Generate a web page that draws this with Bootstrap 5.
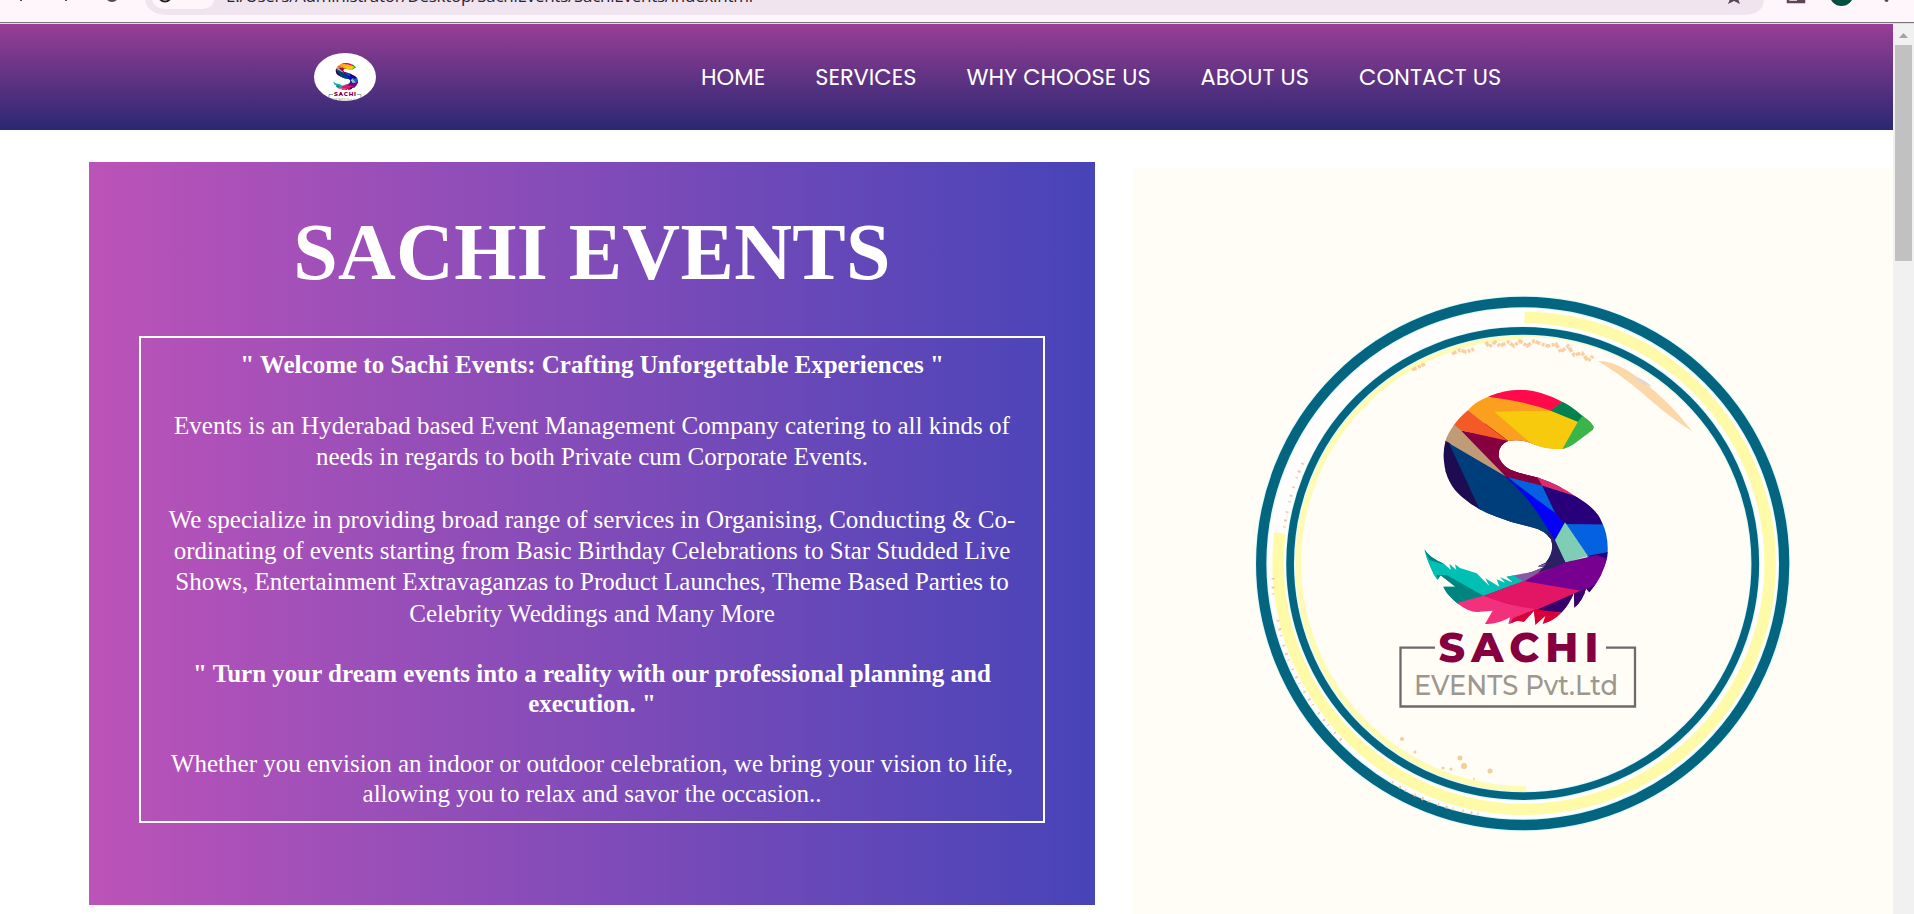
<!DOCTYPE html>
<html lang="en">
<head>
<meta charset="utf-8">
<title>Sachi Events</title>
<link rel="stylesheet" href="https://cdn.jsdelivr.net/npm/bootstrap@5.3.0/dist/css/bootstrap.min.css">
<style>
body{height:914px;overflow:hidden;background:#fff}
.chrome{height:24px;background:#fff6fb;border-bottom:1px solid #e3dbe2}
.chrome svg{display:block}
.page{height:890px}
.site-head{height:106px;background:linear-gradient(#983e95,#2a2873)}
.brand-logo{width:62px;height:48px;margin-left:314px}
.menu{margin-left:325px;gap:50px}
.menu a{font:22.5px/34px Poppins,Inter,sans-serif;color:#fff;text-decoration:none;white-space:nowrap}
.intro{width:1006px;height:743px;margin:32px 0 0 89px;padding:0 50px;background:linear-gradient(90deg,#bc53b8,#4744b8);font-family:"Liberation Serif",serif}
.intro h1{font-size:80px;line-height:92px;font-weight:700;letter-spacing:.35px;margin:44px 0 38px}
.welcome{border:2px solid #fff;height:487px;padding-top:12px;white-space:nowrap}
.welcome p,.welcome h2{font-size:25px;margin:0}
.welcome .about{line-height:31.25px;margin-top:30px}
.welcome h2{font-weight:700;line-height:30px}
.welcome h2.tagline{margin-top:30px}
.welcome .closing{line-height:30px;margin-top:30px}
.poster{width:760px;height:746px;margin:38px 0 0 38px}
.sbar{width:21px;background:#f1f1f1}
.thumb{width:17px;height:216px;background:#c1c1c1}
</style>
<script src="https://cdn.jsdelivr.net/npm/bootstrap@5.3.0/dist/js/bootstrap.bundle.min.js"></script>
</head>
<body>
<div class="chrome">
<svg width="1914" height="23" viewBox="0 0 1914 23">
<path d="M145 0Q148 15 168 15H1745Q1763 14 1764 0Z" fill="#f0e5ef"/>
<path d="M152 0Q155 9 166 9H203Q213 8 214 0Z" fill="#fff6fb"/>
<path d="M0 22H1914V23H0Z" fill="#77757a"/>
<circle cx="165" cy="-5" r="6.5" fill="none" stroke="#222" stroke-width="2"/>
<path d="M21 0V1M66 0V1" stroke="#5c4656" stroke-width="2"/><circle cx="112" cy="-5" r="6" fill="none" stroke="#5c4656" stroke-width="2"/>
<text x="226" y="2" font-family="Open Sans,sans-serif" font-size="17" textLength="527" fill="#2b2230">E:/Users/Administrator/Desktop/SachiEvents/SachiEvents/index.html</text>
<path d="M1734-12L1736-6 1743-5 1738-1 1740 4 1734 1 1728 4 1730-1 1725-5 1732-6Z" fill="#5c4656"/>
<path d="M1788-8H1804V2H1788Z" fill="none" stroke="#5c4656" stroke-width="2.5"/><path d="M1797-8H1804V2H1797Z" fill="#5c4656"/>
<circle cx="1841.500" cy="-6" r="12" fill="#005040"/><circle cx="1886.500" cy="0" r="2" fill="#5c4656"/>
</svg>
</div>
<div class="page d-flex">
<main class="flex-grow-1">
<header class="site-head d-flex align-items-center">
<svg class="brand-logo" viewBox="314 53 62 48">
<defs><clipPath id="oval"><ellipse cx="345" cy="77" rx="31" ry="24"/></clipPath></defs>
<g clip-path="url(#oval)"><path d="M314 53H376V101H314Z" fill="#fff"/>
<use href="#mark-s" transform="translate(327 60.500) scale(.0455 .039)"/>
<text x="334" y="95.500" font-family="Montserrat,Inter,sans-serif" font-size="5.800" font-weight="800" textLength="22" fill="#86003f">SACHI</text>
<path d="M329 94.500H333M357 94.500H361V102M329 94.500V102" fill="none" stroke="#777" stroke-width=".7"/>
<text x="331" y="100.500" font-family="Montserrat,Inter,sans-serif" font-size="4" textLength="28" fill="#8c8882">EVENTS Pvt.Ltd</text></g>
</svg>
<nav class="menu d-flex">
<a href="#">HOME</a><a href="#">SERVICES</a><a href="#">WHY CHOOSE US</a><a href="#">ABOUT US</a><a href="#">CONTACT US</a>
</nav>
</header>
<div class="d-flex">
<section class="intro text-white text-center d-flex flex-column">
<h1>SACHI EVENTS</h1>
<div class="welcome">
<h2>" Welcome to Sachi Events: Crafting Unforgettable Experiences "</h2>
<p class="about">Events is an Hyderabad based Event Management Company catering to all kinds of<br>needs in regards to both Private cum Corporate Events.<br><br>We specialize in providing broad range of services in Organising, Conducting &amp; Co-<br>ordinating of events starting from Basic Birthday Celebrations to Star Studded Live<br>Shows, Entertainment Extravaganzas to Product Launches, Theme Based Parties to<br>Celebrity Weddings and Many More</p>
<h2 class="tagline">" Turn your dream events into a reality with our professional planning and<br>execution. "</h2>
<p class="closing">Whether you envision an indoor or outdoor celebration, we bring your vision to life,<br>allowing you to relax and savor the occasion..</p>
</div>
</section>
<svg class="poster flex-shrink-0" viewBox="1133 168 760 746">
<defs>
<clipPath id="s-outline"><path d="M642 172Q635 155 608 138 570 105 548 96 480 60 420 59 370 60 330 78 285 95 262 122 235 145 222 165 200 195 196 215 188 245 192 275 198 340 245 380 290 420 350 440 400 460 450 470 495 480 513 508 525 545 497 578L474 589 495 590 455 606 380 620 402 640 360 621 375 638 350 628 358 650 316 625 328 648 290 610 240 594 225 583 229 600 208 581 213 600 190 580Q150 565 133 538 145 595 172 630L182 616 226 650 190 650Q205 685 235 702 270 730 300 725L338 722 315 762Q350 765 390 742L385 763 412 752 432 756 462 722 466 765 496 738 488 762Q550 745 582 668L583 714Q610 690 618 655L628 667Q670 620 682 560 688 500 665 455 650 415 585 378 540 345 475 323L430 312Q370 300 357 262 352 225 385 213 420 205 460 222 500 240 550 236 570 232 595 212L638 180Z"/></clipPath>
<g id="mark-s" clip-path="url(#s-outline)">
<path d="M190 300H500L640 470 560 600H460Z" fill="#003e7b"/>
<path d="M280 690L440 610 640 570 620 700 460 740Z" fill="#a00a70"/>
<path d="M375 321L357 262 300 160 470 160 470 340Z" fill="#86003f"/>
<path d="M240 181L385 208 357 262 480 318 490 350 375 321Z" fill="#86003f"/>
<path d="M262 120L240 90 330 60 520 122 600 155 550 245 470 240 430 220 385 213Z" fill="#fba01e"/>
<path d="M343 125L515 122 595 155 550 250Q490 250 455 222Z" fill="#f8ca0e"/>
<path d="M325 80L350 40H480L560 85 515 123Q440 95 325 80Z" fill="#ff0b4b"/>
<path d="M546 96L570 90 625 130 595 156 512 122Z" fill="#03814f"/>
<path d="M608 137L655 140V190L540 250 595 153Z" fill="#3bb54a"/>
<path d="M262 119L382 212 240 181 215 165 225 120Z" fill="#f45a26"/>
<path d="M222 163L242 181 378 320 180 212 190 180Z" fill="#c09b78"/>
<path d="M180 204L210 220 304 420 170 430Z" fill="#1d0c52"/>
<path d="M207 220L375 318 430 376 522 512 480 520 302 425Z" fill="#003e7b"/>
<path d="M372 316L553 460 522 512Q460 390 372 316Z" fill="#0400fa"/>
<path d="M385 322L487 347 527 434Z" fill="#0461df"/>
<path d="M372 316L410 345 527 430 556 465 540 480Z" fill="#0400fa"/>
<path d="M470 318L605 370 595 386 487 348Z" fill="#dd2b70"/>
<path d="M487 347L592 380 700 400V466H555L527 430Z" fill="#29007c"/>
<path d="M555 462L700 464V548L622 560Z" fill="#0461df"/>
<path d="M555 457L624 558 557 578 524 512Z" fill="#80cdb5"/>
<path d="M505 480L526 512 557 580 440 620 480 570Z" fill="#2a2063"/>
<path d="M622 558L700 543V590Z" fill="#29007c"/>
<path d="M430 634L557 577 650 555 700 575 680 700 630 690 600 663Z" fill="#770091"/>
<path d="M370 618L500 580 475 608 430 636 405 645Z" fill="#855aa5"/>
<path d="M125 530L390 610 430 634 310 678 180 660Z" fill="#00bfb3"/>
<path d="M128 530L190 583 148 570ZM170 615H200L310 677 235 705 180 650Z" fill="#008480"/>
<path d="M305 680L430 633 602 662 465 722Z" fill="#e31565"/>
<path d="M220 702L310 677Q380 705 467 718L420 752 310 790Z" fill="#f2307c"/>
<path d="M602 662L660 640 600 730 540 728 467 721Z" fill="#37006d"/>
<path d="M465 718L545 728 500 780H380L400 744Z" fill="#d80037"/>
</g>
</defs>
<path d="M1133 168H1893V914H1133Z" fill="#fffdf6"/>
<g fill="none">
<circle cx="1522.700" cy="563.500" r="247" stroke="#fffefc" stroke-width="22"/>
<path d="M1524.500 317.500A246 246 0 1 1 1280 533" stroke="#fffaa8" stroke-width="11.500"/>
<path d="M1526 789A226 226 0 0 1 1522.700 336.500" stroke="#fffab4" stroke-width="6"/>
<path d="M1522.700 335.500A228 228 0 0 1 1751 585" stroke="#fff9c4" stroke-width="3"/>
<g stroke="#d9fbff"><circle cx="1522.700" cy="563.500" r="261.500" stroke-width="12.500"/><circle cx="1522.700" cy="563.500" r="232.600" stroke-width="9.500"/></g>
<g stroke="#046580"><circle cx="1522.700" cy="563.500" r="261.500" stroke-width="10.300"/><circle cx="1522.700" cy="563.500" r="232.600" stroke-width="7.700"/></g>
<path d="M1412 370L1425 364M1452 354L1460 350 1466 352 1474 349M1486 342L1489 347 1495 342 1500 346 1508 342 1514 346 1520 341 1527 346 1534 341 1541 344 1548 346 1556 344 1561 352 1568 346 1574 355 1582 353 1588 361 1593 356" stroke="#f8cfa2" stroke-width="3.500" stroke-dasharray="5 1.500 3 1"/>
<path d="M1303 463Q1290 490 1284 529M1273 578V597M1278 620Q1288 685 1345 744M1392 782Q1430 808 1486 815" stroke="#f5c5a0" stroke-width="3" stroke-dasharray="1.500 7 2 5 1 9"/>
</g>
<path d="M1598 361Q1618 361 1642 381 1670 402 1692 431 1670 418 1640 391 1618 373 1598 361Z" fill="#fbd7aa"/>
<path d="M1634 376Q1646 380 1652 387L1640 383Z" fill="#dfd9cf"/>
<g fill="#f2cf96"><circle cx="1402" cy="739" r="2"/><circle cx="1415" cy="752" r="1.500"/><circle cx="1460" cy="758" r="2.500"/><circle cx="1464" cy="766" r="3"/><circle cx="1451" cy="769" r="1.500"/><circle cx="1443" cy="768" r="1.500"/><circle cx="1490" cy="771" r="2.500"/><circle cx="1474" cy="779" r="1"/></g>
<use href="#mark-s" transform="translate(1380 370) scale(.33333)"/>
<path d="M1435 647.700H1400.500V706.500H1635V647.700H1606" fill="none" stroke="#6d6a6f" stroke-width="2.300"/>
<text x="1438.500" y="661.700" font-family="Montserrat,Inter,sans-serif" font-size="41" font-weight="800" textLength="160" fill="#86003f">SACHI</text>
<text x="1414" y="695" font-family="Montserrat,Inter,sans-serif" font-size="27" font-weight="500" textLength="204" lengthAdjust="spacingAndGlyphs" fill="#9c978f">EVENTS Pvt.Ltd</text>
</svg>
</div>
</main>
<aside class="sbar d-flex flex-column align-items-center flex-shrink-0">
<svg width="21" height="21" viewBox="0 0 21 21"><path d="M6 14L10.500 9 15 14Z" fill="#a3a3a3"/></svg>
<div class="thumb"></div>
</aside>
</div>
</body>
</html>
